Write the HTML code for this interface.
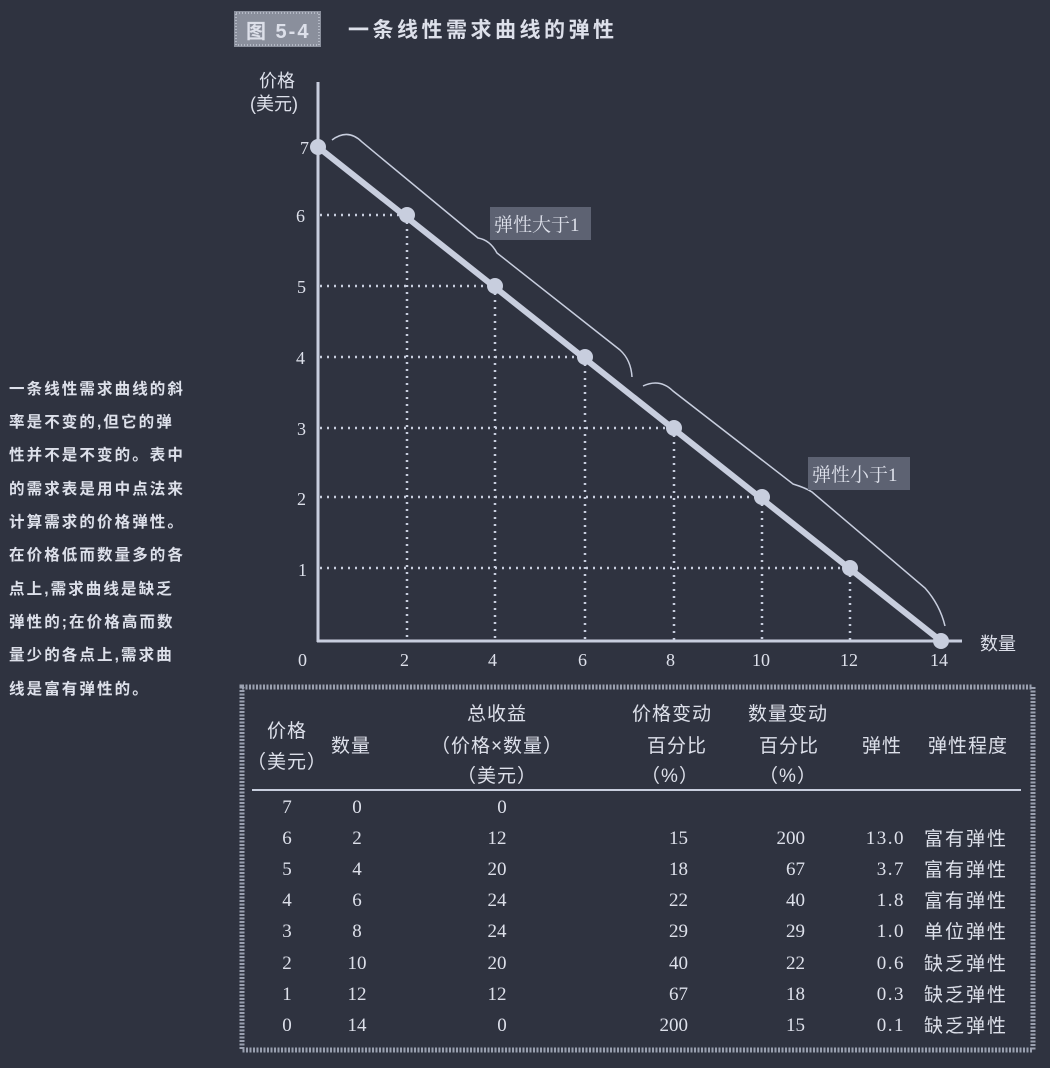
<!DOCTYPE html>
<html><head><meta charset="utf-8"><style>
html,body{margin:0;padding:0;background:#2f3340;}
svg{display:block}
.c{font-family:"Liberation Sans","Noto Sans CJK SC",sans-serif;fill:#dde0ea}
.s{font-family:"Liberation Serif","Noto Serif CJK SC",serif;fill:#dde0ea}
</style></head><body>
<svg width="1050" height="1068" viewBox="0 0 1050 1068" xmlns="http://www.w3.org/2000/svg">
<rect width="1050" height="1068" fill="#2f3340"/>
<!-- title -->
<rect x="234" y="11" width="87" height="36" fill="#8a8f9c"/>
<rect x="236" y="13" width="83" height="32" fill="none" stroke="#b5bac6" stroke-width="2" stroke-dasharray="1 2"/>
<text x="246" y="38" class="c" font-size="20" font-weight="bold" fill="#eef0f5" letter-spacing="2">图 5-4</text>
<text x="348" y="37" class="c" font-size="21" font-weight="bold" letter-spacing="3.5">一条线性需求曲线的弹性</text>

<!-- left text -->
<g class="c" font-size="15.5" font-weight="bold" letter-spacing="2.1">
<text x="9" y="394">一条线性需求曲线的斜</text>
<text x="9" y="427">率是不变的,但它的弹</text>
<text x="9" y="460">性并不是不变的。表中</text>
<text x="9" y="494">的需求表是用中点法来</text>
<text x="9" y="527">计算需求的价格弹性。</text>
<text x="9" y="560">在价格低而数量多的各</text>
<text x="9" y="594">点上,需求曲线是缺乏</text>
<text x="9" y="627">弹性的;在价格高而数</text>
<text x="9" y="660">量少的各点上,需求曲</text>
<text x="9" y="694">线是富有弹性的。</text>
</g>

<!-- axes -->
<g stroke="#c8cede" stroke-width="3" fill="none">
<line x1="318" y1="82" x2="318" y2="642"/>
<line x1="317" y1="641" x2="962" y2="641"/>
</g>
<!-- grid dotted -->
<g stroke="#c8cede" stroke-width="2.5" stroke-dasharray="2 5" fill="none">
<line x1="320" y1="215" x2="407" y2="215"/><line x1="407" y1="215" x2="407" y2="640"/>
<line x1="320" y1="286" x2="495" y2="286"/><line x1="495" y1="286" x2="495" y2="640"/>
<line x1="320" y1="357" x2="585" y2="357"/><line x1="585" y1="357" x2="585" y2="640"/>
<line x1="320" y1="428" x2="674" y2="428"/><line x1="674" y1="428" x2="674" y2="640"/>
<line x1="320" y1="497" x2="762" y2="497"/><line x1="762" y1="497" x2="762" y2="640"/>
<line x1="320" y1="568" x2="850" y2="568"/><line x1="850" y1="568" x2="850" y2="640"/>
</g>
<!-- demand line -->
<line x1="318" y1="147" x2="941" y2="641" stroke="#c8cede" stroke-width="6"/>
<g fill="#c8cede">
<circle cx="318" cy="147" r="8"/><circle cx="407" cy="215" r="8"/><circle cx="495" cy="286" r="8"/>
<circle cx="585" cy="357" r="8"/><circle cx="674" cy="428" r="8"/><circle cx="762" cy="497" r="8"/>
<circle cx="850" cy="568" r="8"/><circle cx="941" cy="641" r="8"/>
</g>
<!-- braces -->
<g stroke="#c8cede" stroke-width="1.5" fill="none">
<path d="M332,140 Q348,128 362,142 L478,238 Q490,240 497,253 L620,350 Q631,360 632,377"/>
<path d="M643,386 Q660,378 673,391 L793,484 Q806,488 812,492 L925,588 Q940,605 945,626"/>
</g>
<!-- labels -->
<rect x="490" y="207" width="101" height="33" fill="#5d6272"/>
<text x="494" y="231" class="s" font-size="19" fill="#e8eaf0">弹性大于1</text>
<rect x="808" y="457" width="102" height="33" fill="#5d6272"/>
<text x="812" y="481" class="s" font-size="19" fill="#e8eaf0">弹性小于1</text>

<!-- axis labels -->
<g class="s" font-size="18">
<text x="300" y="154">7</text><text x="296" y="222">6</text><text x="297" y="293">5</text>
<text x="296" y="364">4</text><text x="297" y="435">3</text><text x="297" y="505">2</text>
<text x="298" y="576">1</text><text x="298" y="666">0</text>
<text x="400" y="666">2</text><text x="488" y="666">4</text><text x="578" y="666">6</text>
<text x="666" y="666">8</text><text x="752" y="666">10</text><text x="840" y="666">12</text><text x="930" y="666">14</text>
</g>
<text x="259" y="87" class="c" font-size="18">价格</text>
<text x="250" y="110" class="c" font-size="18">(美元)</text>
<text x="980" y="650" class="c" font-size="18">数量</text>

<!-- table -->
<rect x="242" y="687" width="791" height="363" fill="none" stroke="#9aa0b0" stroke-width="5" stroke-dasharray="2 1.5"/>
<line x1="252" y1="790" x2="1021" y2="790" stroke="#c8cede" stroke-width="2"/>
<g class="c" font-size="19" text-anchor="middle" letter-spacing="1">
<text x="287" y="737">价格</text>
<text x="287" y="768">（美元）</text>
<text x="351" y="752">数量</text>
<text x="497" y="720">总收益</text>
<text x="497" y="752">（价格×数量）</text>
<text x="497" y="782">（美元）</text>
<text x="672" y="720">价格变动</text>
<text x="677" y="752">百分比</text>
<text x="670" y="782">（%）</text>
<text x="788" y="720">数量变动</text>
<text x="789" y="752">百分比</text>
<text x="788" y="782">（%）</text>
<text x="882" y="752">弹性</text>
<text x="968" y="752">弹性程度</text>
</g>
<g class="s" font-size="19">
<g text-anchor="middle">
<text x="287" y="813">7</text><text x="357" y="813">0</text><text x="502" y="813">0</text>
<text x="287" y="844">6</text><text x="357" y="844">2</text><text x="497" y="844">12</text>
<text x="287" y="875">5</text><text x="357" y="875">4</text><text x="497" y="875">20</text>
<text x="287" y="906">4</text><text x="357" y="906">6</text><text x="497" y="906">24</text>
<text x="287" y="937">3</text><text x="357" y="937">8</text><text x="497" y="937">24</text>
<text x="287" y="969">2</text><text x="357" y="969">10</text><text x="497" y="969">20</text>
<text x="287" y="1000">1</text><text x="357" y="1000">12</text><text x="497" y="1000">12</text>
<text x="287" y="1031">0</text><text x="357" y="1031">14</text><text x="502" y="1031">0</text>
</g>
<g text-anchor="end">
<text x="688" y="844">15</text><text x="805" y="844">200</text><text x="905" y="844" letter-spacing="1.5">13.0</text>
<text x="688" y="875">18</text><text x="805" y="875">67</text><text x="905" y="875" letter-spacing="1.5">3.7</text>
<text x="688" y="906">22</text><text x="805" y="906">40</text><text x="905" y="906" letter-spacing="1.5">1.8</text>
<text x="688" y="937">29</text><text x="805" y="937">29</text><text x="905" y="937" letter-spacing="1.5">1.0</text>
<text x="688" y="969">40</text><text x="805" y="969">22</text><text x="905" y="969" letter-spacing="1.5">0.6</text>
<text x="688" y="1000">67</text><text x="805" y="1000">18</text><text x="905" y="1000" letter-spacing="1.5">0.3</text>
<text x="688" y="1031">200</text><text x="805" y="1031">15</text><text x="905" y="1031" letter-spacing="1.5">0.1</text>
</g>
</g>
<g class="c" font-size="19" letter-spacing="2">
<text x="924" y="845">富有弹性</text>
<text x="924" y="876">富有弹性</text>
<text x="924" y="907">富有弹性</text>
<text x="924" y="938">单位弹性</text>
<text x="924" y="970">缺乏弹性</text>
<text x="924" y="1001">缺乏弹性</text>
<text x="924" y="1032">缺乏弹性</text>
</g>
</svg>
</body></html>
